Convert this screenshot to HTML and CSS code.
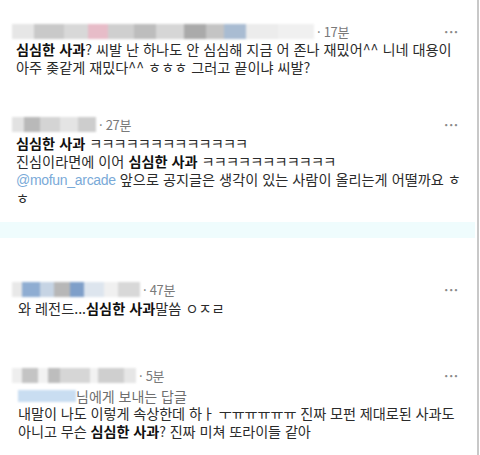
FILE: index.html
```html
<!DOCTYPE html>
<html lang="ko">
<head>
<meta charset="utf-8">
<link rel="stylesheet" href="styles.css">
</head>
<body>
<div class="frame">
  <section class="tweet t1">
    <div class="head">
      <span class="mosaic m1">
        <i class="b" style="width:22px;background:#e6e6e6"></i><i class="b" style="width:30px;background:#c9c9c9"></i><i class="b" style="width:24px;background:#d8d8d8"></i><i class="b" style="width:20px;background:#e7bcc8"></i><i class="b" style="width:26px;background:#cfcfcf"></i><i class="b" style="width:22px;background:#bdbdbd"></i><i class="b" style="width:28px;background:#d6d6d6"></i><i class="b" style="width:22px;background:#aaaaaa"></i><i class="b" style="width:18px;background:#c4c4c4"></i><i class="b" style="width:22px;background:#a9bcd2"></i><i class="b" style="width:32px;background:#ececec"></i><i class="b" style="width:36px;background:#f0f0f0"></i>
      </span>
      <span class="time">· 17분</span>
      <span class="more">···</span>
    </div>
    <p class="body"><b>심심한 사과</b>? 씨발 난 하나도 안 심심해 지금 어 존나 재밌어^^ 니네 대용이<br>아주 좆같게 재밌다^^ ㅎㅎㅎ 그러고 끝이냐 씨발?</p>
  </section>

  <section class="tweet t2">
    <div class="head">
      <span class="mosaic m2">
        <i class="b" style="width:12px;background:#e2e2e2"></i><i class="b" style="width:16px;background:#b9b9b9"></i><i class="b" style="width:20px;background:#d4d4d4"></i><i class="b" style="width:18px;background:#e4e4e4"></i><i class="b" style="width:18px;background:#cdcdcd"></i>
      </span>
      <span class="time">· 27분</span>
      <span class="more">···</span>
    </div>
    <p class="body"><b>심심한 사과</b> <span class="jamo">ㅋㅋㅋㅋㅋㅋㅋㅋㅋㅋㅋㅋㅋ</span><br>진심이라면에 이어 <b>심심한 사과</b> <span class="jamo">ㅋㅋㅋㅋㅋㅋㅋㅋㅋㅋㅋ</span><br><span class="mention">@mofun_arcade</span> 앞으로 공지글은 생각이 있는 사람이 올리는게 어떨까요 ㅎ<br>ㅎ</p>
  </section>

  <div class="band"></div>

  <section class="tweet t3">
    <div class="head">
      <span class="mosaic m3">
        <i class="b" style="width:10px;background:#e8e8e8"></i><i class="b" style="width:18px;background:#8fadd2"></i><i class="b" style="width:14px;background:#c6d4e4"></i><i class="b" style="width:16px;background:#b7b7b7"></i><i class="b" style="width:14px;background:#7f9fc9"></i><i class="b" style="width:20px;background:#dde5ee"></i><i class="b" style="width:14px;background:#f0f0f0"></i><i class="b" style="width:22px;background:#d8d8d8"></i>
      </span>
      <span class="time">· 47분</span>
      <span class="more">···</span>
    </div>
    <p class="body">와 레전드...<b>심심한 사과</b>말씀 ㅇㅈㄹ</p>
  </section>

  <section class="tweet t4">
    <div class="head">
      <span class="mosaic m4">
        <i class="b" style="width:10px;background:#eeeeee"></i><i class="b" style="width:16px;background:#c4c4c4"></i><i class="b" style="width:10px;background:#f2f2f2"></i><i class="b" style="width:12px;background:#bdbdbd"></i><i class="b" style="width:30px;background:#d6d6d6"></i><i class="b" style="width:8px;background:#f2f2f2"></i><i class="b" style="width:26px;background:#cfcfcf"></i><i class="b" style="width:12px;background:#e6e6e6"></i>
      </span>
      <span class="time">· 5분</span>
      <span class="more">···</span>
    </div>
    <div class="reply"><span class="mosaic m5"><i class="b" style="width:58px;background:#c9ddf1"></i></span><span>님에게 보내는 답글</span></div>
    <p class="body">내말이 나도 이렇게 속상한데 하ㅏ ㅜㅠㅠㅠㅠㅠ 진짜 모펀 제대로된 사과도<br>아니고 무슨 <b>심심한 사과</b>? 진짜 미쳐 또라이들 같아</p>
  </section>
</div>
</body>
</html>
```

FILE: styles.css
```css
* { box-sizing: border-box; }
html, body { margin: 0; padding: 0; background: #fff; }
body {
  width: 480px;
  height: 455px;
  overflow: hidden;
  font-family: "Noto Sans CJK KR", "Noto Sans", sans-serif;
  color: #2b2b2b;
}
.frame {
  width: 479px;
  height: 455px;
  border-right: 2px solid #c8c8c8;
  display: flex;
  flex-direction: column;
}
.tweet {
  padding: 0 18px 0 16px;
}
.head {
  display: flex;
  align-items: center;
  height: 16px;
}
.mosaic {
  display: inline-flex;
  height: 15px;
  filter: blur(1.2px);
  margin-left: -4px;
}
.b { display: block; height: 100%; }
.time {
  font-size: 13px;
  color: #7a7a7a;
  margin-left: 3px;
  letter-spacing: -0.3px;
}
.more {
  margin-left: auto;
  font-size: 12px;
  color: #8a8a8a;
  letter-spacing: 1px;
  font-weight: bold;
}
.body {
  margin: 0;
  font-size: 14.2px;
  line-height: 18px;
  white-space: nowrap;
}
.body b { font-weight: 700; color: #111; }
.jamo { letter-spacing: -0.9px; }
.mention {
  color: #7aaad8;
  font-family: "Liberation Sans", sans-serif;
  font-size: 14px;
  letter-spacing: -0.3px;
}
.t1 { padding-top: 23px; }
.t1 .body { margin-top: 1px; }
.t2 { padding-top: 40px; }
.t2 .body { margin-top: 2px; }
.band {
  height: 16px;
  margin-top: 15px;
  background: #effcfd;
  margin-right: 2px;
}
.t3 { padding-top: 43px; }
.t3 .body { margin-top: 2px; padding-left: 2px; }
.t4 { padding-top: 50px; }
.reply {
  display: flex;
  align-items: center;
  height: 16px;
  font-size: 14px;
  color: #6e6e6e;
  margin-top: 5px;
}
.reply .mosaic { margin-left: 2px; height: 12px; }
.t4 .body { padding-left: 2px; margin-top: 0; letter-spacing: -0.1px; }
```
